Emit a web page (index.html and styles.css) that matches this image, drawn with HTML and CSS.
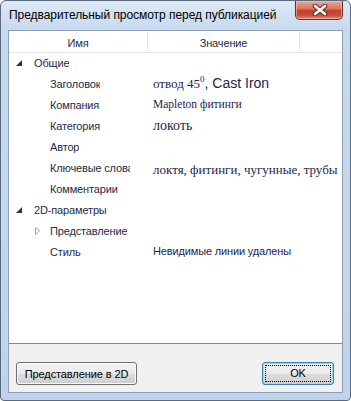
FILE: index.html
```html
<!DOCTYPE html>
<html lang="ru">
<head>
    <meta charset="UTF-8">
    <title>Предварительный просмотр перед публикацией</title>
    <link rel="stylesheet" href="styles.css">
</head>
<body>
    <div class="window">
        <div class="titlebar">
            <span class="title">Предварительный просмотр перед публикацией</span>
            <span class="close">
                <svg width="16" height="12" viewBox="0 0 16 12">
                    <path d="M3 2 L13 10 M13 2 L3 10" stroke="#4a3430" stroke-width="4.6" stroke-linecap="round"/>
                    <path d="M3 2 L13 10 M13 2 L3 10" stroke="#ffffff" stroke-width="2.6" stroke-linecap="round"/>
                </svg>
            </span>
        </div>

        <div class="client">
            <div class="list">
                <div class="header">
                    <div class="col">Имя</div>
                    <div class="col">Значение</div>
                    <div class="col last"></div>
                </div>

                <div class="row">
                    <div class="name lvl0">
                        <span class="exp"><svg width="16" height="16" viewBox="0 0 16 16"><polygon points="8,5 8,11 2,11" fill="#333"/></svg></span>
                        <span class="label">Общие</span>
                    </div>
                    <div class="value"></div>
                </div>
                <div class="row">
                    <div class="name lvl1"><span class="exp"></span><span class="label">Заголовок</span></div>
                    <div class="value"><span class="serif t13">отвод 45</span><sup class="serif sup">0</sup><span class="t14">, Cast Iron</span></div>
                </div>
                <div class="row">
                    <div class="name lvl1"><span class="exp"></span><span class="label">Компания</span></div>
                    <div class="value"><span class="serif t11">Mapleton фитинги</span></div>
                </div>
                <div class="row">
                    <div class="name lvl1"><span class="exp"></span><span class="label">Категория</span></div>
                    <div class="value"><span class="serif t14">локоть</span></div>
                </div>
                <div class="row">
                    <div class="name lvl1"><span class="exp"></span><span class="label">Автор</span></div>
                    <div class="value"></div>
                </div>
                <div class="row">
                    <div class="name lvl1"><span class="exp"></span><span class="label">Ключевые слова</span></div>
                    <div class="value low"><span class="serif t13">локтя, фитинги, чугунные, трубы</span></div>
                </div>
                <div class="row">
                    <div class="name lvl1"><span class="exp"></span><span class="label">Комментарии</span></div>
                    <div class="value"></div>
                </div>
                <div class="row">
                    <div class="name lvl0">
                        <span class="exp"><svg width="16" height="16" viewBox="0 0 16 16"><polygon points="8,5 8,11 2,11" fill="#333"/></svg></span>
                        <span class="label">2D-параметры</span>
                    </div>
                    <div class="value"></div>
                </div>
                <div class="row">
                    <div class="name lvl1">
                        <span class="exp"><svg width="16" height="16" viewBox="0 0 16 16"><polygon points="5.5,4.5 9.5,8 5.5,11.5" fill="#fff" stroke="#a6a6a6"/></svg></span>
                        <span class="label">Представление</span>
                    </div>
                    <div class="value"></div>
                </div>
                <div class="row">
                    <div class="name lvl1"><span class="exp"></span><span class="label">Стиль</span></div>
                    <div class="value"><span class="sans">Невидимые линии удалены</span></div>
                </div>
            </div>

            <div class="buttons">
                <button class="btn btn-2d">Представление в 2D</button>
                <button class="btn btn-ok"><span class="focus">OK</span></button>
            </div>
        </div>
    </div>
</body>
</html>
```

FILE: styles.css
```css
* {
    box-sizing: border-box;
}
body {
    margin: 0;
    font-family: "Liberation Sans", Arial, sans-serif;
    font-size: 11px;
    letter-spacing: -0.15px;
    background-color: #fff;
}
.window {
    width: 351px;
    height: 401px;
    border: 1px solid #5b6b7e;
    border-radius: 6px 6px 4px 4px;
    background: linear-gradient(#dce8f5, #c6d9ef 30px, #bfd4ec);
    padding: 0 7px 7px 7px;
    display: flex;
    flex-direction: column;
}
.titlebar {
    height: 29px;
    display: flex;
    justify-content: space-between;
    align-items: flex-start;
}
.title {
    font-size: 12px;
    letter-spacing: -0.05px;
    line-height: 29px;
    padding-left: 1px;
    color: #000;
}
.close {
    width: 48px;
    height: 19px;
    display: flex;
    justify-content: center;
    align-items: center;
    padding-left: 2px;
    border: 1px solid #6e2b22;
    border-top: none;
    border-radius: 0 0 5px 5px;
    background: linear-gradient(#e9a795, #d8705f 45%, #c3412d 52%, #c9503b 80%, #dc8a76);
    box-shadow: inset 0 0 0 1px rgba(255, 210, 200, 0.5);
}
.close svg {
    display: block;
}
.client {
    flex: 1;
    background-color: #f0f0f0;
    border: 1px solid #8e9eb3;
    display: flex;
    flex-direction: column;
}
.list {
    height: 313px;
    background-color: #fff;
    border-bottom: 1px solid #828790;
}
.header {
    display: grid;
    grid-template-columns: 139px 152px 1fr;
    height: 22px;
    border-bottom: 1px solid #e5e5e5;
}
.header .col {
    text-align: center;
    line-height: 19px;
    padding-top: 3px;
    color: #1e2b45;
    border-right: 1px solid #e5e5e5;
    border-image: linear-gradient(#fff 2px, #e5e5e5 2px) 1;
}
.header .col.last {
    border-right: none;
}
.row {
    display: grid;
    grid-template-columns: 139px 1fr;
    height: 21px;
}
.name {
    height: 19px;
    display: flex;
    align-items: center;
    padding-right: 18px;
    overflow: hidden;
    color: #1e2b45;
}
.name.lvl0 {
    padding-left: 5px;
}
.name.lvl1 {
    padding-left: 21px;
}
.exp {
    flex: 0 0 16px;
    height: 16px;
    margin-right: 4px;
}
.exp svg {
    display: block;
}
.label {
    min-width: 0;
    overflow: hidden;
    white-space: nowrap;
}
.value {
    padding-left: 5px;
    height: 19px;
    line-height: 19px;
    white-space: nowrap;
    overflow: hidden;
    letter-spacing: 0;
    color: #1c2550;
}
.value.low {
    padding-top: 2px;
}
.serif {
    font-family: "Liberation Serif", "Times New Roman", serif;
}
.t11 {
    font-size: 11.5px;
}
.t13 {
    font-size: 13px;
}
.t14 {
    font-size: 14px;
}
.sup {
    font-size: 9px;
    vertical-align: 6px;
    line-height: 0;
}
.sans {
    font-size: 11px;
    letter-spacing: -0.15px;
}
.buttons {
    display: flex;
    justify-content: space-between;
    padding: 18px 8px 0 7px;
}
.btn {
    height: 23px;
    padding: 0;
    font-family: "Liberation Sans", Arial, sans-serif;
    font-size: 11px;
    letter-spacing: -0.1px;
    color: #000;
    border: 1px solid #707070;
    border-radius: 3px;
    background: linear-gradient(#f2f2f2, #ebebeb 50%, #dddddd 50%, #cfcfcf);
    box-shadow: inset 0 0 0 1px #fbfbfb;
}
.btn-2d {
    width: 121px;
}
.btn-ok {
    width: 72px;
    padding: 2px;
    border-color: #3c7fb1;
    box-shadow: inset 0 0 0 1px #9fd6f5;
}
.focus {
    display: block;
    height: 17px;
    line-height: 15px;
    border: 1px dotted #000;
}
```
